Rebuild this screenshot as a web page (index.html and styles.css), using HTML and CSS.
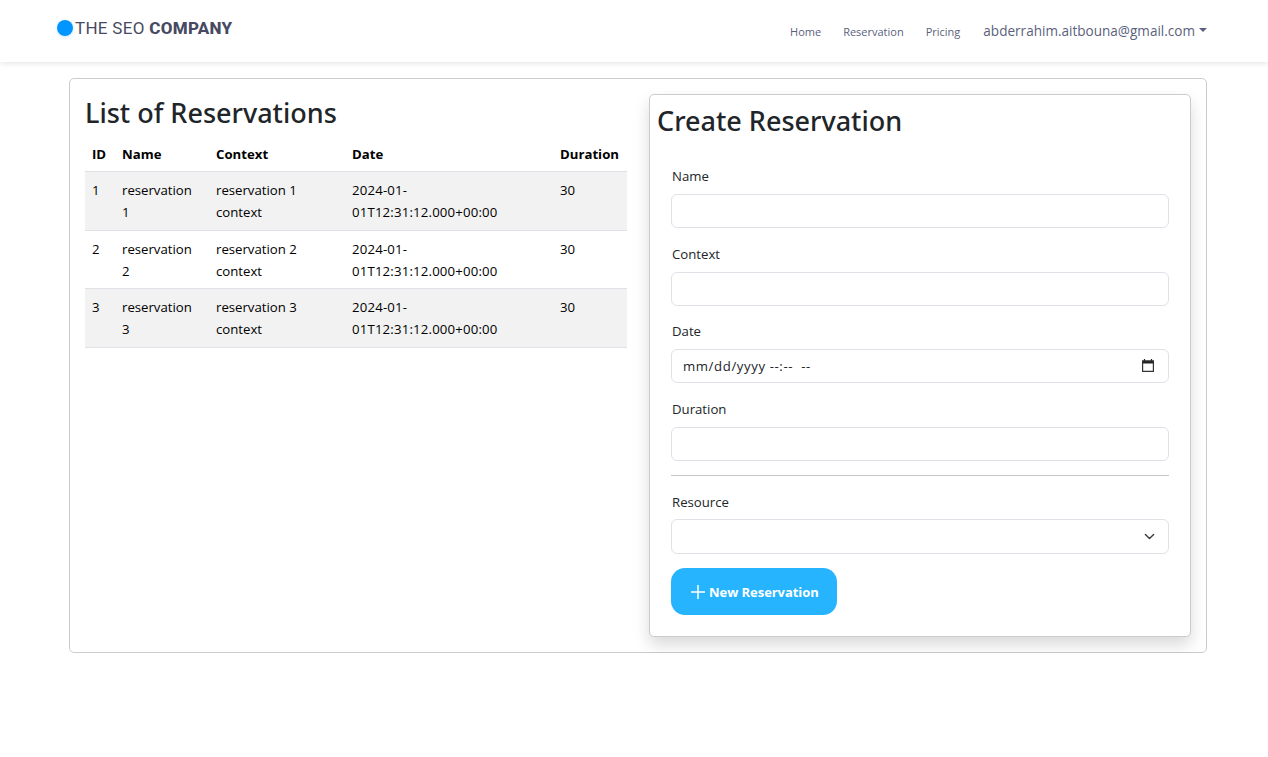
FILE: index.html
```html
<!DOCTYPE html>
<html lang="en">
<head>
    <meta charset="UTF-8">
    <title>Reservations</title>
    <link rel="stylesheet" href="styles.css">
</head>
<body>

    <nav class="navbar">
        <a class="brand" href="#">
            <span class="brand-dot"></span>
            <span class="brand-text">THE SEO <b>COMPANY</b></span>
        </a>
        <ul class="nav-links">
            <li><a href="#">Home</a></li>
            <li><a href="#">Reservation</a></li>
            <li><a href="#">Pricing</a></li>
        </ul>
        <a class="nav-user" href="#">abderrahim.aitbouna@gmail.com<span class="caret"></span></a>
    </nav>

    <main class="page">
        <section class="panel">
            <div class="list-col">
                <h2 class="list-title">List of Reservations</h2>
                <table class="res-table">
                    <colgroup>
                        <col class="col-id">
                        <col class="col-name">
                        <col class="col-context">
                        <col class="col-date">
                        <col class="col-duration">
                    </colgroup>
                    <thead>
                        <tr>
                            <th>ID</th>
                            <th>Name</th>
                            <th>Context</th>
                            <th>Date</th>
                            <th>Duration</th>
                        </tr>
                    </thead>
                    <tbody>
                        <tr>
                            <td>1</td>
                            <td>reservation 1</td>
                            <td>reservation 1 context</td>
                            <td class="cell-date">2024-01-01T12:31:12.000+00:00</td>
                            <td>30</td>
                        </tr>
                        <tr>
                            <td>2</td>
                            <td>reservation 2</td>
                            <td>reservation 2 context</td>
                            <td class="cell-date">2024-01-01T12:31:12.000+00:00</td>
                            <td>30</td>
                        </tr>
                        <tr>
                            <td>3</td>
                            <td>reservation 3</td>
                            <td>reservation 3 context</td>
                            <td class="cell-date">2024-01-01T12:31:12.000+00:00</td>
                            <td>30</td>
                        </tr>
                    </tbody>
                </table>
            </div>

            <div class="form-card">
                <h2 class="form-title">Create Reservation</h2>
                <form class="res-form">
                    <div class="field">
                        <label for="name">Name</label>
                        <input type="text" id="name">
                    </div>
                    <div class="field">
                        <label for="context">Context</label>
                        <input type="text" id="context">
                    </div>
                    <div class="field">
                        <label for="date">Date</label>
                        <div class="input-wrap">
                            <input type="text" id="date" class="input-date" placeholder="mm/dd/yyyy --:--  --">
                            <svg class="calendar" viewBox="0 0 12 13" width="12" height="13"><path d="M2.5 0v2M9.5 0v2" stroke="#222" stroke-width="1.2"/><path d="M0 1.5h12v3H0z" fill="#222"/><path d="M.6 2h10.8v10.4H.6z" fill="none" stroke="#333" stroke-width="1.2"/></svg>
                        </div>
                    </div>
                    <div class="field field-last">
                        <label for="duration">Duration</label>
                        <input type="number" id="duration">
                    </div>
                    <hr class="divider">
                    <div class="field field-select">
                        <label for="resource">Resource</label>
                        <div class="input-wrap">
                            <select id="resource"><option></option></select>
                            <svg class="chevron" viewBox="0 0 16 16" width="16" height="16"><path d="M2 5l6 6 6-6" fill="none" stroke="#343a40" stroke-width="2" stroke-linecap="round" stroke-linejoin="round"/></svg>
                        </div>
                    </div>
                    <button type="button" class="btn-new">
                        <svg viewBox="0 0 14 14" width="14" height="14"><path d="M7 0v14M0 7h14" fill="none" stroke="#fff" stroke-width="1.5"/></svg>
                        New Reservation
                    </button>
                </form>
            </div>
        </section>
    </main>

</body>
</html>
```

FILE: styles.css
```css
* {
    box-sizing: border-box;
}

body {
    margin: 0;
    font-family: "Open Sans", "Noto Sans", sans-serif;
    font-size: 13.2px;
    color: #212529;
    background-color: #fff;
}

/* Navbar */
.navbar {
    display: flex;
    align-items: center;
    height: 62px;
    padding: 0 61px 0 57px;
    background-color: #fff;
    box-shadow: 0 1px 6px rgba(0, 0, 0, 0.12);
}

.brand {
    display: flex;
    align-items: center;
    gap: 2px;
    margin-top: -6px;
    text-decoration: none;
}

.brand-dot {
    width: 16px;
    height: 16px;
    border-radius: 50%;
    background-color: #0095ff;
    box-shadow: 0 2px 4px rgba(0, 149, 255, 0.15);
}

.brand-text {
    font-family: Roboto, sans-serif;
    font-size: 17px;
    font-weight: 400;
    letter-spacing: 0.3px;
    color: #474a63;
}

.brand-text b {
    font-weight: 800;
}

.nav-links {
    display: flex;
    gap: 22px;
    margin: 0 0 0 auto;
    padding: 0;
    list-style: none;
}

.nav-links a {
    font-size: 11px;
    color: #5a5f7d;
    text-decoration: none;
}

.nav-user {
    display: flex;
    align-items: center;
    margin-left: 23px;
    font-size: 13.55px;
    color: #5a5f7d;
    text-decoration: none;
}

.caret {
    width: 0;
    height: 0;
    margin-left: 4px;
    margin-bottom: 2px;
    border-top: 4px solid #5a5f7d;
    border-left: 4px solid transparent;
    border-right: 4px solid transparent;
}

/* Panel */
.page {
    padding: 16px 61px 0 69px;
}

.panel {
    display: grid;
    grid-template-columns: 542px 542px;
    column-gap: 22px;
    height: 575px;
    padding: 15px;
    border: 1px solid #ccc;
    border-radius: 5px;
}

.list-title,
.form-title {
    margin: 0;
    font-family: "Noto Sans", sans-serif;
    font-size: 27px;
    font-weight: 500;
    line-height: 38px;
}

.list-title {
    margin-bottom: 4px;
}

/* Table */
.res-table {
    width: 100%;
    border-collapse: collapse;
    table-layout: fixed;
    color: #000;
}

.col-id { width: 30px; }
.col-name { width: 94px; }
.col-context { width: 136px; }
.col-date { width: 208px; }
.col-duration { width: 74px; }

.res-table th,
.res-table td {
    padding: 8.2px 7px 5.8px;
    text-align: left;
    vertical-align: top;
    line-height: 21.83px;
    border-bottom: 1px solid #dee2e6;
}

.res-table th {
    padding: 8px 7px 6px;
    line-height: 21px;
    font-weight: 700;
}

.res-table .cell-date {
    letter-spacing: 0.18px;
}

.res-table tbody tr:nth-child(odd) {
    background-color: #f2f2f2;
}

/* Form */
.form-card {
    height: 543px;
    padding: 7px;
    border: 1px solid #ccc;
    border-radius: 5px;
    background-color: #fff;
    box-shadow: 0 8px 16px rgba(0, 0, 0, 0.15);
}

.res-form {
    padding: 26px 14px 0;
}

.field {
    margin-bottom: 15.7px;
}

.field-last {
    margin-bottom: 14px;
}

.field-select {
    margin-bottom: 14px;
}

.field label {
    display: block;
    margin-bottom: 7px;
    padding-left: 1px;
    line-height: 21px;
}

.field input,
.field select {
    display: block;
    width: 100%;
    height: 34px;
    padding: 6px 12px;
    border: 1px solid #dee2e6;
    border-radius: 6px;
    font-family: inherit;
    font-size: 13.2px;
    color: #212529;
    background-color: #fff;
}

.field .input-date {
    padding-left: 11px;
    letter-spacing: 0.6px;
}

.field input::placeholder {
    color: #212529;
    opacity: 1;
}

.field select {
    height: 35px;
    margin-top: -1px;
    appearance: none;
}

.input-wrap {
    position: relative;
}

.calendar {
    position: absolute;
    top: 10px;
    right: 15px;
}

.chevron {
    position: absolute;
    top: 12px;
    right: 14px;
    width: 11px;
    height: 11px;
}

.divider {
    height: 1px;
    margin: 0 0 16px;
    border: none;
    background-color: #c6c6c6;
}

.btn-new {
    display: flex;
    align-items: center;
    gap: 4px;
    height: 47px;
    padding: 0 18px 0 20px;
    border: none;
    border-radius: 14px;
    font-family: inherit;
    font-size: 13px;
    font-weight: 700;
    letter-spacing: -0.05px;
    color: #fff;
    background-color: #27b4ff;
    cursor: pointer;
}
```
